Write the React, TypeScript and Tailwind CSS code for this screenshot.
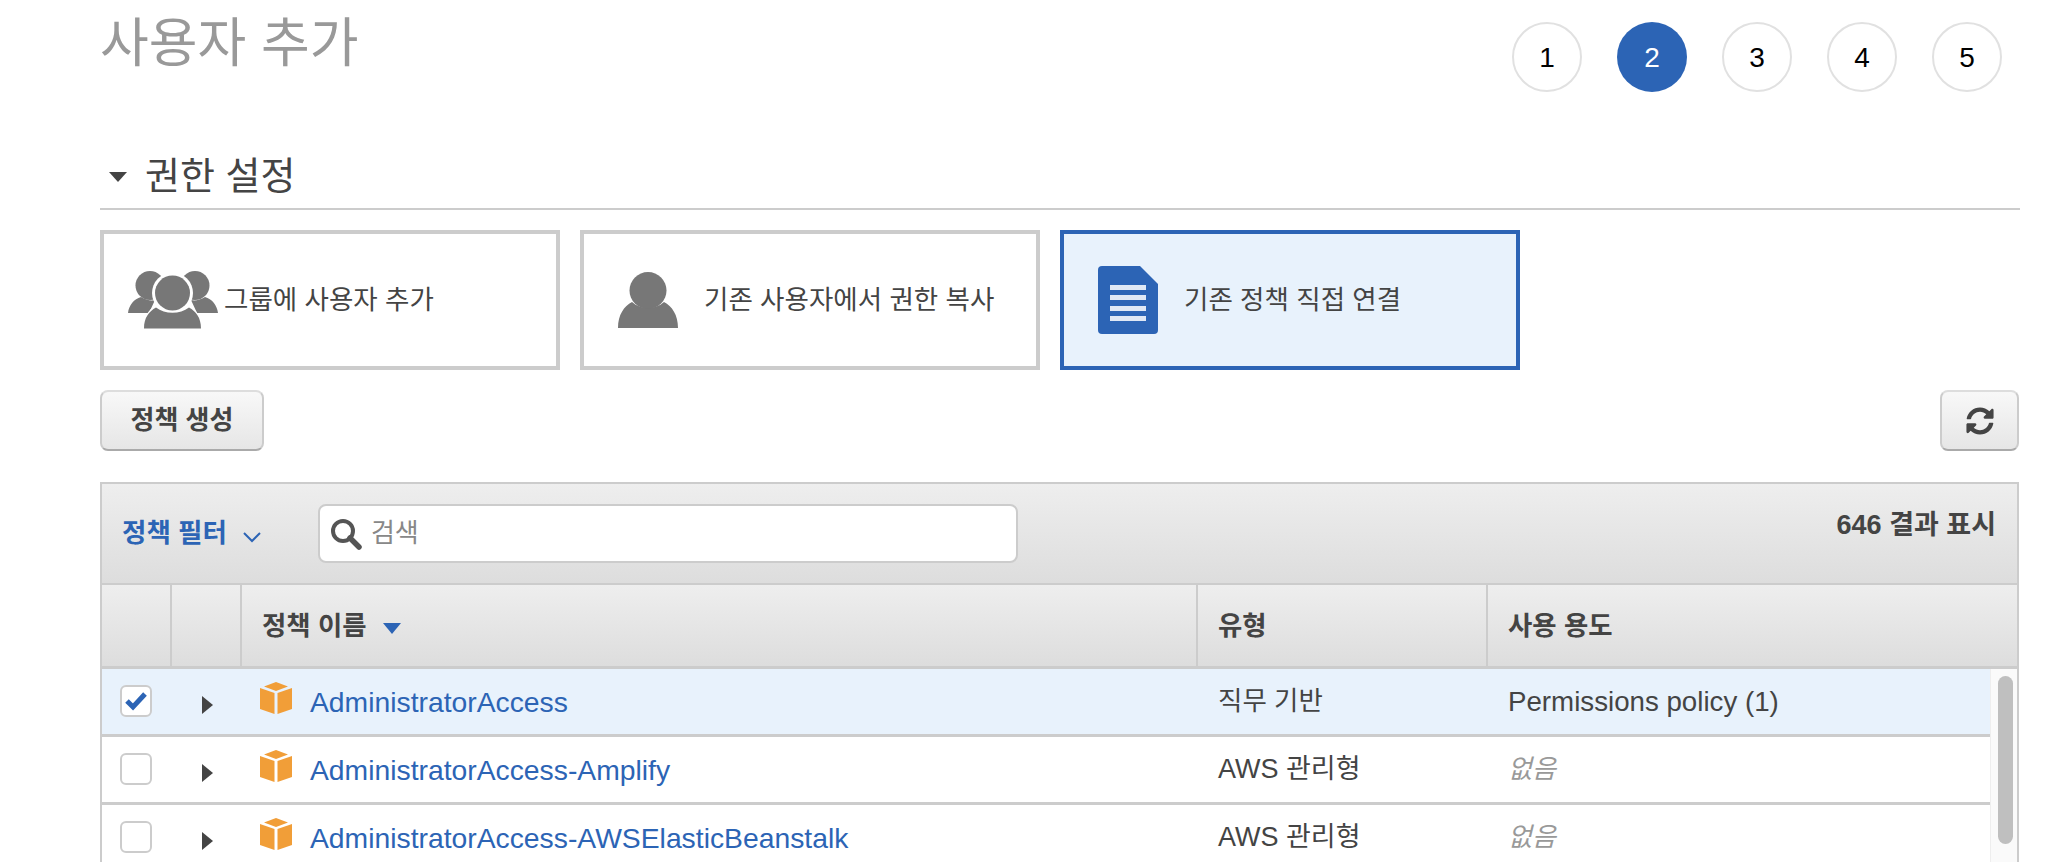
import { useState } from 'react';
import { FaSyncAlt } from 'react-icons/fa';

const font = "font-['Liberation_Sans','Noto_Sans_CJK_KR',sans-serif]";

const policies = [
  { name: 'AdministratorAccess', type: '직무 기반', usage: 'Permissions policy (1)', checked: true },
  { name: 'AdministratorAccess-Amplify', type: 'AWS 관리형', usage: '없음', checked: false },
  { name: 'AdministratorAccess-AWSElasticBeanstalk', type: 'AWS 관리형', usage: '없음', checked: false },
];

function GroupIcon() {
  return (
    <svg width="90" height="58" viewBox="0 0 90 58" className="shrink-0">
      <circle cx="22" cy="14.500" r="14.500" fill="#777" />
      <circle cx="67" cy="14.500" r="14.500" fill="#777" />
      <path d="M0 42c1-8 6-14 13-16 5 3 10 4 14 3l-6 13H0z" fill="#777" />
      <path d="M90 42c-1-8-6-14-13-16-5 3-10 4-14 3l6 13h21z" fill="#777" />
      <circle cx="44.500" cy="22" r="20.500" fill="#fff" />
      <circle cx="44.500" cy="22" r="17.500" fill="#777" />
      <path d="M15 58c0-11 5-19 13-24 9 8 24 8 33 0 8 5 13 13 13 24H15z" fill="#fff" />
      <path d="M16 57.500c0-11 5-17 12-21 9 7 24 7 33 0 7 4 12 10 12 21H16z" fill="#777" />
    </svg>
  );
}

function UserIcon() {
  return (
    <svg width="60" height="56" viewBox="0 0 60 56" className="shrink-0">
      <path d="M0 56c0-13 6-22 14-26 9 8 23 8 32 0 8 4 14 13 14 26H0z" fill="#777" />
      <circle cx="30" cy="18.500" r="18.500" fill="#777" />
    </svg>
  );
}

function DocIcon() {
  return (
    <svg width="60" height="68" viewBox="0 0 60 68" className="shrink-0">
      <path d="M4 0h38l18 18v46a4 4 0 0 1-4 4H4a4 4 0 0 1-4-4V4a4 4 0 0 1 4-4z" fill="#2c64b5" />
      <rect x="12" y="19" width="36" height="5" fill="#dfe8f5" />
      <rect x="12" y="29" width="36" height="5" fill="#dfe8f5" />
      <rect x="12" y="40" width="36" height="5" fill="#dfe8f5" />
      <rect x="12" y="50" width="36" height="5" fill="#dfe8f5" />
    </svg>
  );
}

function CubeIcon() {
  return (
    <svg width="32" height="32" viewBox="0 0 32 32" className="shrink-0">
      <path d="M16 0l12 4.500-12 4.500-12-4.500z" fill="#f19e38" />
      <path d="M0 6l14.500 5V32L0 27z" fill="#f19e38" />
      <path d="M32 6l-14.500 5V32L32 27z" fill="#f19e38" />
    </svg>
  );
}

export default function App() {
  const [rows] = useState(policies);

  return (
    <div className={`${font} w-[2050px] h-[862px] overflow-hidden bg-white text-[#444] pl-[100px] pr-[30px]`}>
      {/* title + steps */}
      <div className="flex justify-between h-[136px]">
        <h1 className="text-[53px] leading-[88px] text-[#999] font-normal">사용자 추가</h1>
        <div className="flex gap-[35px] pt-[22px] pr-[18px] h-[92px] box-content">
          {[1, 2, 3, 4, 5].map((n) => (
            <div
              key={n}
              className={
                n === 2
                  ? 'w-[70px] h-[70px] rounded-full flex items-center justify-center pt-[2px] bg-[#2c64b5] text-white text-[28px]'
                  : 'w-[70px] h-[70px] rounded-full flex items-center justify-center pt-[2px] border-2 border-[#e1e1e1] text-black text-[28px]'
              }
            >
              {n}
            </div>
          ))}
        </div>
      </div>

      {/* section heading */}
      <div className="flex items-center h-[74px] border-b-2 border-[#ccc]">
        <div className="ml-[9px] w-0 h-0 border-x-[9px] border-x-transparent border-t-[10px] border-t-[#444] mt-[10px]" />
        <h2 className="ml-[18px] pt-[8px] text-[38px] font-normal leading-[50px]">권한 설정</h2>
      </div>

      {/* option cards */}
      <div className="flex gap-[20px] mt-[20px]">
        <div className="w-[460px] h-[140px] border-4 border-[#ccc] flex items-center pl-[24px] gap-[6px] text-[26.500px]">
          <GroupIcon />
          <span className="pt-[2px]">그룹에 사용자 추가</span>
        </div>
        <div className="w-[460px] h-[140px] border-4 border-[#ccc] flex items-center pl-[34px] gap-[26px] text-[26.500px]">
          <UserIcon />
          <span className="pt-[2px]">기존 사용자에서 권한 복사</span>
        </div>
        <div className="w-[460px] h-[140px] border-4 border-[#2c64b5] bg-[#e8f2fc] flex items-center pl-[34px] gap-[26px] text-[26.500px]">
          <DocIcon />
          <span className="pt-[2px]">기존 정책 직접 연결</span>
        </div>
      </div>

      {/* actions */}
      <div className="flex justify-between mt-[20px] pr-[1px]">
        <button className="w-[164px] h-[61px] rounded-[8px] border-2 border-[#ccc] border-t-[#ddd] border-b-[#aaa] bg-gradient-to-b from-[#f8f8f8] to-[#e6e6e6] text-[26px] font-bold">
          정책 생성
        </button>
        <button className="w-[79px] h-[61px] rounded-[8px] border-2 border-[#ccc] border-t-[#ddd] border-b-[#aaa] bg-gradient-to-b from-[#f8f8f8] to-[#e6e6e6] flex items-center justify-center">
          <FaSyncAlt size={28} color="#444" />
        </button>
      </div>

      {/* table */}
      <div className="mt-[31px] mr-[1px] border-x-2 border-t-2 border-[#ccc]">
        <div className="h-[101px] flex items-start justify-between bg-gradient-to-b from-[#eee] to-[#ddd] border-b-2 border-[#ccc]">
          <div className="flex items-center pt-[20px]">
            <span className="ml-[20px] text-[26.500px] font-bold text-[#2c64b5] leading-[59px]">정책 필터</span>
            <svg width="20" height="12" viewBox="0 0 20 12" fill="none" stroke="#2c64b5" strokeWidth="2" className="ml-[15px] mt-[6px]">
              <path d="M2 2l8 8 8-8" />
            </svg>
            <div className="ml-[56px] w-[700px] h-[59px] rounded-[8px] border-2 border-[#ccc] bg-white flex items-center pl-[10px] gap-[9px]">
              <svg width="32" height="32" viewBox="0 0 32 32" fill="none" stroke="#555" className="shrink-0">
                <circle cx="13" cy="13" r="10" strokeWidth="4" />
                <path d="M20 20l9 9" strokeWidth="5.500" strokeLinecap="round" />
              </svg>
              <span className="text-[26px] text-[#888]">검색</span>
            </div>
          </div>
          <span className="mr-[21px] mt-[23px] text-[27px] font-bold leading-[36px]">646 결과 표시</span>
        </div>

        <div className="h-[84px] flex bg-gradient-to-b from-[#eee] to-[#ddd] border-b-[3px] border-[#ccc] text-[26.400px] font-bold">
          <div className="w-[70px] border-r-2 border-[#ccc]" />
          <div className="w-[70px] border-r-2 border-[#ccc]" />
          <div className="w-[956px] border-r-2 border-[#ccc] flex items-center pl-[20px] gap-[17px] pt-[3px]">
            <span>정책 이름</span>
            <div className="w-0 h-0 border-x-[9px] border-x-transparent border-t-[11px] border-t-[#2c64b5] mt-[3px]" />
          </div>
          <div className="w-[290px] border-r-2 border-[#ccc] flex items-center pl-[20px] pt-[3px]">유형</div>
          <div className="flex-1 flex items-center pl-[20px] pt-[3px]">사용 용도</div>
        </div>

        <div className="flex h-[193px]">
          <div className="flex-1 min-w-0">
            {rows.map((row) => (
              <div
                key={row.name}
                className={
                  row.checked
                    ? 'h-[68px] flex items-center border-b-[3px] border-[#ccc] bg-[#e8f2fc]'
                    : 'h-[68px] flex items-center border-b-[3px] border-[#ccc]'
                }
              >
                <div className="w-[70px] flex justify-center pr-[3px] mb-[2px]">
                  <div className="w-[32px] h-[32px] rounded-[6px] border-2 border-[#ccc] bg-white flex items-center justify-center">
                    {row.checked && (
                      <svg width="24" height="20" viewBox="0 0 24 20" fill="none" stroke="#2c64b5" strokeWidth="5">
                        <path d="M3 10l6 6L21 3" />
                      </svg>
                    )}
                  </div>
                </div>
                <div className="w-[70px] pl-[30px] pt-[6px]">
                  <div className="w-0 h-0 border-y-[9px] border-y-transparent border-l-[11px] border-l-[#444]" />
                </div>
                <div className="w-[956px] flex items-center pl-[18px] gap-[18px]">
                  <div className="-mt-[8px]">
                    <CubeIcon />
                  </div>
                  <span className="text-[28.300px] text-[#2c64b5] pt-[2px]">{row.name}</span>
                </div>
                <div className={row.checked ? 'w-[290px] pl-[20px] text-[26.500px]' : 'w-[290px] pl-[20px] text-[27px]'}>{row.type}</div>
                {row.usage === '없음' ? (
                  <div className="pl-[20px] text-[26px] italic text-[#999]">{row.usage}</div>
                ) : (
                  <div className="pl-[20px] text-[27.700px]">{row.usage}</div>
                )}
              </div>
            ))}
          </div>
          <div className="w-[27px] bg-[#fafafa] border-l border-[#eee] pl-[7px] pt-[7px]">
            <div className="w-[15px] h-[168px] rounded-full bg-[#bfbfbf]" />
          </div>
        </div>
      </div>
    </div>
  );
}
